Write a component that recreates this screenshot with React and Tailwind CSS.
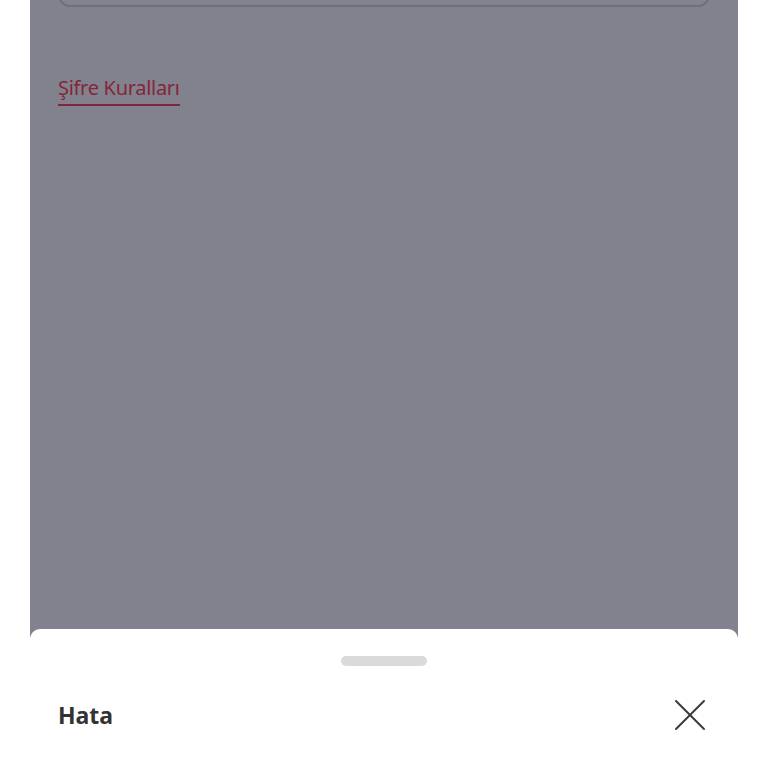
import React from 'react';

const CloseIcon = () => (
  <svg width="32" height="32" viewBox="0 0 32 32" fill="none" stroke="#3a3a3a" strokeWidth="2" strokeLinecap="round">
    <path d="M2 2 L30 30" />
    <path d="M30 2 L2 30" />
  </svg>
);

const App = () => {
  return (
    <div className="w-full h-[768px] bg-white overflow-hidden font-['Noto_Sans',sans-serif]">
      <div className="ml-[30px] w-[708px] h-full flex flex-col">
        {/* Dimmed page behind the sheet */}
        <div className="flex-1 bg-[#81828d] px-[28px] overflow-hidden">
          <div className="-mt-[50px] h-[57px] rounded-xl border-2 border-[#6f707a] bg-[#82838e]"></div>
          <a className="inline-block mt-[67px] text-[20px] leading-[28px] tracking-[-0.3px] text-[#852538] border-b-2 border-[#852538] pb-[2px]">
            Şifre Kuralları
          </a>
        </div>

        {/* Bottom sheet */}
        <div className="h-[139px] -mt-[8px] bg-white rounded-t-[10px] shrink-0">
          <div className="pt-[27px] flex justify-center">
            <div className="w-[86px] h-[10px] rounded-full bg-[#dadada]"></div>
          </div>
          <div className="mt-[33px] pl-[28px] pr-[32px] flex items-center justify-between">
            <h2 className="text-[23px] leading-[32px] font-bold text-[#333333]">Hata</h2>
            <button className="w-[32px] h-[32px] flex items-center justify-center">
              <CloseIcon />
            </button>
          </div>
        </div>
      </div>
    </div>
  );
};

export default App;
